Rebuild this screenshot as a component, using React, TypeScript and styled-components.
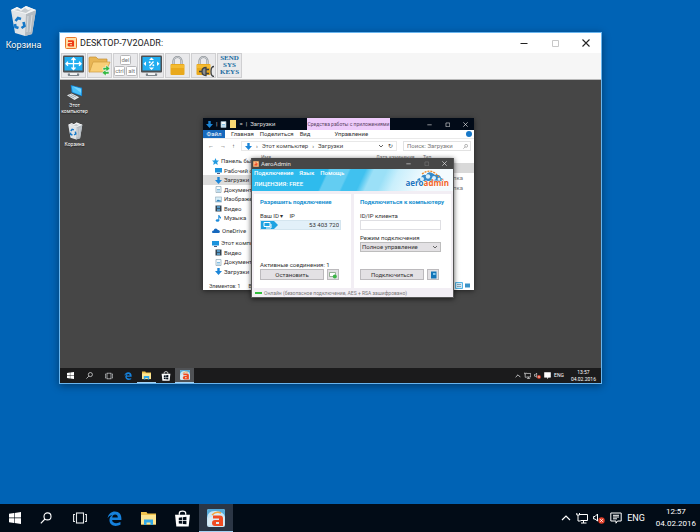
import React from 'react';
import styled, { createGlobalStyle, css } from 'styled-components';

const Global = createGlobalStyle`
  *, *::before, *::after { box-sizing: border-box; }
  body { margin: 0; background: #0063b5; font-family: Roboto, "Noto Sans", sans-serif; overflow: hidden; }
  button, input, select { font: inherit; color: inherit; margin: 0; }
  button { padding: 0; border: 0; background: none; display: flex; align-items: center; justify-content: center; }
  svg { display: block; flex: none; }
`;

/* ---------- icons ---------- */
type IconProps = { size?: number };

const BinIcon = ({ size = 32 }: IconProps) => (
  <svg width={size} height={size} viewBox="0 0 32 32">
    <path d="M4 5 L10 2 L14 4 L19 1 L24 3 L29 5 L25 29 L18 31 L8 28Z" fill="#dfe3e6" />
    <path d="M19 9 L29 5 L25 29 L18 31Z" fill="#b4bbc1" />
    <path d="M4 5 L19 9 L29 5 L24 3 L19 1 L14 4 L10 2Z" fill="#f4f5f6" />
    <path d="M7 5l4-1 3 2 4-3 3 2 4-1-6 4z" fill="#c6ccd0" />
    <path d="M21 11l-1 16M25 10l-2 17M6 9l3 17" stroke="#d9dee1" strokeWidth="1" />
    <path d="M8.500 16l2.500-3 3 1M16.500 17l1 4-3 2M11.500 23l-3-1-.5-3" fill="none" stroke="#1678c8" strokeWidth="2.600" />
  </svg>
);

const ComputerIcon = ({ size = 18 }: IconProps) => (
  <svg width={size} height={size} viewBox="0 0 18 18">
    <path d="M5 1L17 4v9L6 9z" fill="#1687d5" />
    <path d="M6 2l10 3v7L7 8.500z" fill="#48c0fa" />
    <path d="M7 2.500l9 7V5z" fill="#75d6ff" />
    <path d="M1 12l5-2 8 4-5 3z" fill="#e8ecef" />
    <path d="M3 12l6 3M5 11l6 3" stroke="#96a1a9" />
  </svg>
);

const AeroBadge = ({ size = 12 }: IconProps) => (
  <svg width={size} height={size} viewBox="0 0 12 12">
    <rect x=".5" y=".5" width="11" height="11" rx="1" fill="#ffe1a8" stroke="#e8762c" />
    <path d="M3 3.200h4.500Q9 3.200 9 4.600V9.500H4.200Q2.500 9.500 2.500 7.800T4.200 6H7V5H3zM7 7.300H4.800v1H7z" fill="#ee3a18" fillRule="evenodd" />
  </svg>
);

const AeroTaskIcon = ({ size = 18 }: IconProps) => (
  <svg width={size} height={size} viewBox="0 0 18 18">
    <rect width="18" height="18" rx="2" fill="#c9e6f5" />
    <path d="M0 9Q1 1 9 2T18 8V2Q18 0 16 0H2Q0 0 0 2z" fill="#56abd9" />
    <path d="M1 12q0-4 4-4 1-4 5-4 3 0 5 3 3 0 2 6v3H1z" fill="#dcecf4" />
    <path d="M5 6q4-4 9-2" fill="none" stroke="#f6a63a" strokeWidth="1.500" />
    <path d="M6 6.500h7q3 0 3 3V17H8q-3 0-3-3t3-3h4V9.500H6zM12 13H9v2h3z" fill="#f04b21" fillRule="evenodd" />
  </svg>
);

const MonitorFrame = ({ children }: { children: React.ReactNode }) => (
  <svg width="23" height="23" viewBox="0 0 23 23">
    <rect x="1" y="1.500" width="21" height="17" rx="1" fill="#4d5052" />
    <rect x="2.500" y="3" width="18" height="13.500" fill="#22aef0" />
    <path d="M6 19.500q-1 3 2 2.500h7q3 .5 2-2.500z" fill="#7d858b" />
    <path d="M8 19h7v2H8z" fill="#f1f2f3" />
    {children}
  </svg>
);

const FitIcon = () => (
  <MonitorFrame>
    <path d="M11.500 4v11.500M4 9.700h15M9.500 6l2-2 2 2M9.500 13.500l2 2 2-2M6 7.700l-2 2 2 2M17 7.700l2 2-2 2" fill="none" stroke="#fff" strokeWidth="1.300" />
  </MonitorFrame>
);

const ScaleIcon = () => (
  <MonitorFrame>
    <path d="M9 6l2.500-2.500L14 6zM9 13.500l2.500 2.500 2.500-2.500zM6 7.500L3.500 9.700 6 12zM17 7.500l2.500 2.200L17 12z" fill="#fff" />
    <path d="M13.500 7.500l-4 4.500" stroke="#fff" strokeWidth="1.300" />
    <circle cx="9.700" cy="8.300" r="1" fill="#fff" />
    <circle cx="13.300" cy="11.300" r="1" fill="#fff" />
  </MonitorFrame>
);

const TransferIcon = () => (
  <svg width="23" height="23" viewBox="0 0 23 23">
    <path d="M1 4q0-1 1-1h6l2 2h9v4H6L2 18H1z" fill="#e8b554" stroke="#c58f35" strokeWidth=".7" />
    <path d="M5 8h17l-4 10H1.500z" fill="#f9cf77" stroke="#cf9c40" strokeWidth=".7" />
    <path d="M15 13.500h3V11l4 3.500-4 3.500v-2h-3zM21 17.500v2.500h-3v2l-4-3.300 4-3.200v2z" fill="#36b845" stroke="#fff" strokeWidth=".5" />
  </svg>
);

const CadIcon = () => (
  <svg width="23" height="23" viewBox="0 0 23 23" fontFamily="Roboto" fontSize="6" fill="#777" textAnchor="middle">
    <g fill="#fff" stroke="#b7b7b9">
      <rect x="6.500" y="1.500" width="10" height="9" rx="1" />
      <rect x=".5" y="12.500" width="10" height="9" rx="1" />
      <rect x="12.500" y="12.500" width="10" height="9" rx="1" />
    </g>
    <text x="11.500" y="8">del</text>
    <text x="5.500" y="19">ctrl</text>
    <text x="17.500" y="19">alt</text>
  </svg>
);

const LockIcon = ({ plug = false }: { plug?: boolean }) => (
  <svg width="23" height="23" viewBox="0 0 23 23">
    <path d="M7.500 11V7a4 4 0 0 1 8 0v4" fill="none" stroke="#8c9196" strokeWidth="2.200" />
    <path d="M7.500 10V7a4 4 0 0 1 8 0v3" fill="none" stroke="#d9dcdf" strokeWidth=".8" />
    <rect x="4.500" y="10" width="14" height="11" rx="1" fill="#e9a91d" />
    <path d="M5 11h13v3H5z" fill="#f4bb31" />
    {plug && (
      <g>
        <path d="M7 17.500h3M14 13.500q-4 0-4 4t4 4z" fill="#8b8f93" stroke="#3f4245" strokeWidth="1.300" />
        <path d="M14 15.500h3M14 19.500h3M22 12.500q-3 0-3 5t3 5" fill="none" stroke="#3f4245" strokeWidth="1.300" />
      </g>
    )}
  </svg>
);

const StartIcon = ({ size = 12 }: IconProps) => (
  <svg width={size} height={size} viewBox="0 0 12 12" fill="#fff">
    <path d="M0 1.700l5-.7v4.600H0zM5.600.9L12 0v5.600H5.600zM0 6.300h5V11l-5-.7zM5.600 6.300H12V12l-6.400-.9z" />
  </svg>
);

const SearchIcon = ({ size = 12, color = '#fff' }: IconProps & { color?: string }) => (
  <svg width={size} height={size} viewBox="0 0 12 12" fill="none" stroke={color} strokeWidth="1.100">
    <circle cx="7.500" cy="4.400" r="3.500" />
    <path d="M5 7L.8 11.300" />
  </svg>
);

const TaskViewIcon = ({ size = 14 }: IconProps) => (
  <svg width={size} height={size} viewBox="0 0 14 14" fill="none" stroke="#e6e8ea" strokeWidth="1.100">
    <rect x="3.500" y="2" width="7" height="10" />
    <path d="M2 3.500H.6v7H2M12 3.500h1.400v7H12" />
  </svg>
);

const EdgeIcon = ({ size = 14 }: IconProps) => (
  <svg width={size} height={size} viewBox="0 0 24 24" fill="#1581dc">
    <path d="M1 11.500C2 4.500 7 .8 12.600.8 19.600.8 23 6 23 11.800V14.500H8.200c.2 3.400 3 5 6.600 5 2.600 0 4.700-.6 6.700-1.800V22c-2.200 1.200-4.800 1.800-7.600 1.800-6 0-10-3.500-10-9.300 0-3.700 2-6.500 5-8.100C4.900 7 2.600 8.700 1 11.500zM8.300 10.300h9c0-2.800-1.500-4.600-4.300-4.600-2.500 0-4.200 1.700-4.700 4.600z" />
  </svg>
);

const FolderIcon = ({ size = 15 }: IconProps) => (
  <svg width={size} height={size} viewBox="0 0 15 15">
    <path d="M0 1h5.500l1 1.500H15v11H0z" fill="#f2c44d" />
    <path d="M0 4h15v9.500H0z" fill="#fde693" />
    <path d="M3 14V8.500h9V14H9.500v-2.500h-4V14z" fill="#32a9e8" />
  </svg>
);

const StoreIcon = ({ size = 16 }: IconProps) => (
  <svg width={size} height={size} viewBox="0 0 16 16">
    <path d="M5 4.500V3q0-2 3-2t3 2v1.500" fill="none" stroke="#fff" strokeWidth="1.200" />
    <path d="M1 4.500h14L13.800 15.500H2.200z" fill="#fff" />
    <path d="M4.500 7.200l3-.3v2.700h-3zM8.200 6.800l3.500-.4v3.200H8.200zM4.500 10.300h3V13l-3-.3zM8.200 10.300h3.500v3.200l-3.500-.4z" fill="#020c17" />
  </svg>
);

const ChevronUp = ({ size = 10 }: IconProps) => (
  <svg width={size} height={size} viewBox="0 0 10 10" fill="none" stroke="#fff" strokeWidth="1.200"><path d="M1 7l4-4 4 4" /></svg>
);

const NetworkIcon = ({ size = 12 }: IconProps) => (
  <svg width={size} height={size} viewBox="0 0 12 12" fill="none" stroke="#fff">
    <path d="M4 2.500h7.500v6H4.500M7.500 8.500v2.500M5 11h5.500M.8 1v2h2.700V1M2 3v6h2.500" />
  </svg>
);

const VolumeIcon = ({ size = 12 }: IconProps) => (
  <svg width={size} height={size} viewBox="0 0 12 12" fill="none" stroke="#fff">
    <path d="M.6 4.500H2L4.500 2v7L2 7H.6z" />
    <circle cx="8.500" cy="8.500" r="3.200" fill="#e4432d" stroke="none" />
    <path d="M7.300 7.300l2.400 2.400M9.700 7.300L7.300 9.700" />
  </svg>
);

const NoticeIcon = ({ size = 12, filled = false }: IconProps & { filled?: boolean }) => (
  <svg width={size} height={size} viewBox="0 0 12 12" fill={filled ? '#fff' : 'none'} stroke="#fff">
    <path d="M.8 1h10.400v8H7.500L6 11.200V9H.8z" />
    {!filled && <path d="M3 3.300h6M3 5h6M3 6.800h4" />}
  </svg>
);

const MinIcon = ({ size = 8 }: IconProps) => (
  <svg width={size} height={size} viewBox="0 0 8 8" stroke="currentColor"><path d="M.5 4.500h7" /></svg>
);
const MaxIcon = ({ size = 8 }: IconProps) => (
  <svg width={size} height={size} viewBox="0 0 8 8" fill="none" stroke="currentColor"><path d="M1.500 1.500h6v6h-6z" /></svg>
);
const CloseIcon = ({ size = 8 }: IconProps) => (
  <svg width={size} height={size} viewBox="0 0 8 8" stroke="currentColor" strokeWidth="1.100"><path d="M.5.5l7 7M7.500.5l-7 7" /></svg>
);
const ChevronDown = () => (
  <svg width="6" height="6" viewBox="0 0 6 6" fill="none" stroke="#666"><path d="M1 2l2 2 2-2" /></svg>
);

const DownArrow = ({ size = 7 }: IconProps) => (
  <svg width={size} height={size} viewBox="0 0 7 7" fill="#1c86d8"><path d="M2.300 0h2.400v3H7L3.500 7 0 3h2.300z" /></svg>
);
const StarIcon = () => (
  <svg width="7" height="7" viewBox="0 0 7 7" fill="#239be0"><path d="M3.500 0l1 2.400L7 2.600 5.200 4.300l.5 2.600-2.200-1.400-2.200 1.400.5-2.600L0 2.600l2.500-.2z" /></svg>
);
const ScreenIcon = () => (
  <svg width="7" height="7" viewBox="0 0 7 7"><path d="M0 1h7v4.500H0z" fill="#1e94dd" /><path d="M2 6.500h3" stroke="#557" /></svg>
);
const PageIcon = () => (
  <svg width="7" height="7" viewBox="0 0 7 7"><path d="M1 .5h5v6H1z" fill="#f6fafc" stroke="#8ba5b5" strokeWidth=".7" /><path d="M2 3.500h3M2 5h3" stroke="#55a3d5" strokeWidth=".7" /></svg>
);
const ImageIcon = () => (
  <svg width="7" height="7" viewBox="0 0 7 7"><path d="M.3 1h6.400v5H.3z" fill="#d8eef8" stroke="#8ba5b5" strokeWidth=".6" /><path d="M1 5.500l2-2 1.200 1L5 4l1.300 1.500z" fill="#287bb5" /></svg>
);
const FilmIcon = () => (
  <svg width="7" height="7" viewBox="0 0 7 7"><path d="M.5.5h6v6h-6z" fill="#35434f" /><path d="M2 1h3v2.200H2zM2 4h3v2H2z" fill="#5698c4" /></svg>
);
const NoteIcon = () => (
  <svg width="7" height="7" viewBox="0 0 7 7" fill="#1e8cda"><ellipse cx="2.500" cy="5.500" rx="1.800" ry="1.300" /><path d="M3.300 0h1q0 1 1.700 2.200V4Q5 3 4.300 2.600v3h-1z" /></svg>
);
const CloudIcon = () => (
  <svg width="8" height="7" viewBox="0 0 8 7" fill="#1668bd"><path d="M1 6q-1.300-.3-.9-1.600Q.6 3.400 1.700 3.500 2 1.500 3.800 1.500q1.500 0 2 1.500 1.900-.2 2.100 1.500Q7.900 6 6.500 6z" /></svg>
);

const AeroLogo = () => (
  <svg width="46" height="20" viewBox="0 0 46 20">
    <path d="M12 12q0-3 4-3 1-4 5-3 2-4 6-2 2 1 3 2 5-1 6 3 3 0 3 3z" fill="#3489c9" />
    <g fill="#d9effa">
      <circle cx="17" cy="10" r="2" /><circle cx="23" cy="7.500" r="2.200" /><circle cx="29" cy="9" r="2" /><circle cx="34" cy="10" r="1.500" />
    </g>
    <path d="M17 5q7-5 13-1l4 4" fill="none" stroke="#f08a2a" strokeWidth="1.300" strokeDasharray="2 1" />
    <text x="44" y="17" textAnchor="end" fontFamily="Open Sans" fontWeight="700" fontSize="8" fill="#1b74c0" stroke="#fff" strokeWidth=".8" paintOrder="stroke">
      aero<tspan fill="#f0642a">admin</tspan>
    </text>
  </svg>
);

/* ---------- desktop ---------- */
const Desktop = styled.main`
  position: relative;
  min-height: 100vh;
  display: flex;
  flex-direction: column;
  justify-content: space-between;
  background: #0063b5;
`;

const Shortcuts = styled.div<{ $small?: boolean }>`
  display: flex;
  flex-direction: column;
  align-items: center;
  color: #fff;
  ${p => p.$small
    ? css`width: 29px; gap: 8px; padding-top: 4px; font-size: 5px; line-height: 6px;`
    : css`width: 47px; padding-top: 5px; font-size: 9px; line-height: 12px;`}
`;

const Shortcut = styled.button<{ $small?: boolean }>`
  flex-direction: column;
  gap: ${p => (p.$small ? 1 : 2)}px;
  text-shadow: 0 1px 1px #0008;
`;

const RemoteWindow = styled.section`
  position: absolute;
  top: 32px;
  left: 59px;
  right: 98px;
  border: 1px solid #69b5ee;
  background: #fff;
  box-shadow: 0 2px 8px #0006;
`;

const TitleBar = styled.header`
  display: flex;
  align-items: center;
  height: 20px;
  padding-left: 5px;
  gap: 3px;
  font-size: 9px;
  color: #222;
`;

const Title = styled.h1`
  margin: 0;
  flex: 1;
  font: inherit;
`;

const WindowButtons = styled.div<{ $small?: boolean }>`
  display: flex;
  button { width: ${p => (p.$small ? 18 : 31)}px; }
  button:disabled { color: #c8c8c8; }
`;

const Toolbar = styled.div`
  display: flex;
  gap: 1px;
  height: 27px;
  padding: 0 1px 1px;
  background: #f6f6f6;
  border-bottom: 1px solid #b9b9b9;
`;

const Tool = styled.button`
  width: 25px;
  height: 25px;
  border: 1px solid #cfcfd1;
  background: #e9e9eb;
`;

const KeysLabel = styled.span`
  color: #176a9f;
  font: 700 7px/7px "Liberation Serif", serif;
`;

const RemoteDesktop = styled.div`
  position: relative;
  min-height: 288px;
  background: #464646;
`;

/* ---------- taskbar ---------- */
const Bar = styled.footer<{ $small?: boolean }>`
  display: flex;
  justify-content: space-between;
  height: ${p => (p.$small ? 15 : 28)}px;
  background: ${p => (p.$small ? '#1b1b1c' : '#020c17')};
  color: #fff;
  font-size: ${p => (p.$small ? 5 : 8)}px;
  line-height: ${p => (p.$small ? 7 : 12)}px;
`;

const Apps = styled.nav`
  display: flex;
`;

const AppButton = styled.button<{ $small?: boolean; $start?: boolean; $state?: 'open' | 'active' }>`
  width: ${p => (p.$small ? (p.$start ? 20 : 19) : p.$start ? 29 : 34)}px;
  ${p => p.$state && css`border-bottom: 1px solid #a5d3f4;`}
  ${p => p.$state === 'active' && css`background: ${p.$small ? '#505255' : '#2b3645'};`}
`;

const Tray = styled.div<{ $small?: boolean }>`
  display: flex;
  align-items: center;
  gap: ${p => (p.$small ? 3 : 5)}px;
  padding-right: ${p => (p.$small ? 5 : 4)}px;
`;

const Language = styled.span<{ $small?: boolean }>`
  font-size: ${p => (p.$small ? 5 : 9)}px;
`;

const Clock = styled.time<{ $small?: boolean }>`
  display: flex;
  flex-direction: column;
  align-items: center;
  margin-left: ${p => (p.$small ? 4 : 6)}px;
`;

function Taskbar({ small, time }: { small?: boolean; time: string }) {
  const s = (large: number, little: number) => (small ? little : large);
  return (
    <Bar $small={small}>
      <Apps>
        <AppButton $small={small} $start aria-label="Пуск"><StartIcon size={s(12, 7)} /></AppButton>
        <AppButton $small={small} aria-label="Поиск"><SearchIcon size={s(12, 7)} /></AppButton>
        <AppButton $small={small} aria-label="Представление задач"><TaskViewIcon size={s(14, 8)} /></AppButton>
        <AppButton $small={small} aria-label="Edge"><EdgeIcon size={s(15, 8)} /></AppButton>
        <AppButton $small={small} $state={small ? 'open' : undefined} aria-label="Проводник"><FolderIcon size={s(15, 9)} /></AppButton>
        <AppButton $small={small} aria-label="Магазин"><StoreIcon size={s(17, 10)} /></AppButton>
        <AppButton $small={small} $state="active" aria-label="AeroAdmin"><AeroTaskIcon size={s(18, 10)} /></AppButton>
      </Apps>
      <Tray $small={small}>
        <ChevronUp size={s(10, 6)} />
        <NetworkIcon size={s(12, 7)} />
        <VolumeIcon size={s(12, 7)} />
        <NoticeIcon size={s(12, 7)} filled={small} />
        <Language $small={small}>ENG</Language>
        <Clock $small={small}><span>{time}</span><span>04.02.2016</span></Clock>
      </Tray>
    </Bar>
  );
}

/* ---------- explorer ---------- */
const Explorer = styled.section`
  position: absolute;
  top: 38px;
  left: 143px;
  width: 271px;
  background: #fff;
  color: #333;
  font-size: 6px;
  line-height: 8px;
  box-shadow: 0 1px 5px #0008;
`;

const ExplorerTitle = styled.header`
  display: flex;
  align-items: center;
  height: 12px;
  padding-left: 3px;
  gap: 3px;
  background: #020b18;
  color: #ddd;
`;

const ContextTab = styled.span`
  margin: 0 auto 0 28px;
  padding: 2px 1px;
  background: #eecbfb;
  color: #5c4566;
  font-size: 5px;
  white-space: nowrap;
`;

const Ribbon = styled.nav`
  display: flex;
  align-items: center;
  height: 9px;
  border-bottom: 1px solid #eaeaea;
  button { line-height: 8px; }
`;

const RibbonTab = styled.button<{ $file?: boolean; $indent?: number }>`
  margin-left: ${p => p.$indent ?? 0}px;
  ${p => p.$file && css`width: 22px; height: 8px; background: #1669bd; color: #fff;`}
`;

const HelpDot = styled.span`
  width: 6px;
  height: 6px;
  margin: 0 2px 0 auto;
  border-radius: 50%;
  background: #1778c8;
`;

const AddressRow = styled.div`
  display: flex;
  align-items: center;
  height: 14px;
  padding: 0 3px 0 5px;
  gap: 6px;
  color: #444;
`;

const Crumbs = styled.div`
  display: flex;
  flex: 1;
  align-items: center;
  gap: 4px;
  height: 10px;
  padding: 0 3px;
  border: 1px solid #e8e8e8;
`;

const Push = styled.span`
  margin-left: auto;
`;

const SearchBox = styled.label`
  display: flex;
  align-items: center;
  width: 68px;
  height: 10px;
  padding: 0 2px;
  border: 1px solid #e2e2e2;
  input { flex: 1; min-width: 0; padding: 0 1px; border: 0; outline: 0; background: none; }
  input::placeholder { color: #777; }
`;

const ExplorerBody = styled.div`
  display: grid;
  grid-template-columns: 58px 1fr;
  height: 128px;
  overflow: hidden;
`;

const Sidebar = styled.ul`
  margin: 0;
  padding: 3px 0 0;
  list-style: none;
`;

const SideItem = styled.li<{ $root?: boolean; $selected?: boolean; $gap?: boolean }>`
  display: flex;
  align-items: center;
  gap: 2px;
  height: 10px;
  margin-top: ${p => (p.$gap ? 3 : 0)}px;
  padding-left: ${p => (p.$root ? 9 : 12)}px;
  white-space: nowrap;
  ${p => p.$selected && css`background: #dcdcdc;`}
  &:nth-child(even) { height: 9px; }
`;

const Files = styled.table`
  width: 100%;
  border-collapse: collapse;
  align-self: start;
  text-align: left;
  white-space: nowrap;
  th, td { padding: 0; font-weight: 400; height: 10px; color: #777; }
  th { padding-bottom: 2px; line-height: 6px; font-size: 5px; }
  th:first-child { width: 54%; }
  th:nth-child(2) { width: 22%; }
  tbody tr:first-child { background: #d9d9d9; }
  td:last-child { text-align: right; padding-right: 11px; }
`;

const ExplorerStatus = styled.footer`
  display: flex;
  align-items: center;
  gap: 8px;
  height: 9px;
  padding: 0 3px 0 6px;
  font-size: 5px;
  svg { margin-left: auto; }
`;

const places: { icon: React.ReactNode; name: string; root?: boolean; selected?: boolean; gap?: boolean }[] = [
  { icon: <StarIcon />, name: 'Панель быстр', root: true },
  { icon: <ScreenIcon />, name: 'Рабочий сто' },
  { icon: <DownArrow />, name: 'Загрузки', selected: true },
  { icon: <PageIcon />, name: 'Документы' },
  { icon: <ImageIcon />, name: 'Изображени' },
  { icon: <FilmIcon />, name: 'Видео' },
  { icon: <NoteIcon />, name: 'Музыка' },
  { icon: <CloudIcon />, name: 'OneDrive', root: true, gap: true },
  { icon: <ScreenIcon />, name: 'Этот компью', root: true, gap: true },
  { icon: <FilmIcon />, name: 'Видео' },
  { icon: <PageIcon />, name: 'Документы' },
  { icon: <DownArrow />, name: 'Загрузки' },
];

function ExplorerWindow() {
  return (
    <Explorer>
      <ExplorerTitle>
        <DownArrow /><span>|</span>
        <PageIcon />
        <svg width="6" height="8" viewBox="0 0 6 8"><path d="M0 0h6v8H0z" fill="#f7d774" /></svg>
        <span>=</span><span>|</span>
        <span>Загрузки</span>
        <ContextTab>Средства работы с приложениями</ContextTab>
        <WindowButtons $small>
          <button aria-label="Свернуть"><MinIcon size={5} /></button>
          <button aria-label="Развернуть"><MaxIcon size={5} /></button>
          <button aria-label="Закрыть"><CloseIcon size={5} /></button>
        </WindowButtons>
      </ExplorerTitle>
      <Ribbon>
        <RibbonTab $file>Файл</RibbonTab>
        <RibbonTab $indent={6}>Главная</RibbonTab>
        <RibbonTab $indent={6}>Поделиться</RibbonTab>
        <RibbonTab $indent={6}>Вид</RibbonTab>
        <RibbonTab $indent={24}>Управление</RibbonTab>
        <HelpDot />
      </Ribbon>
      <AddressRow>
        <span>←</span><span>→</span><span>↑</span>
        <Crumbs>
          <DownArrow /><span>›</span><span>Этот компьютер</span><span>›</span><span>Загрузки</span>
          <Push><ChevronDown /></Push><span>↻</span>
        </Crumbs>
        <SearchBox>
          <input aria-label="Поиск" placeholder="Поиск: Загрузки" />
          <SearchIcon size={5} color="#666" />
        </SearchBox>
      </AddressRow>
      <ExplorerBody>
        <Sidebar>
          {places.map((p, i) => (
            <SideItem key={i} $root={p.root} $selected={p.selected} $gap={p.gap}>{p.icon}{p.name}</SideItem>
          ))}
        </Sidebar>
        <Files>
          <thead><tr><th>Имя</th><th>Дата изменения</th><th>Тип</th></tr></thead>
          <tbody>
            <tr><td /><td /><td /></tr>
            <tr><td /><td /><td>пка</td></tr>
            <tr><td /><td /><td>пка</td></tr>
          </tbody>
        </Files>
      </ExplorerBody>
      <ExplorerStatus>
        <span>Элементов: 1</span><span>Вы</span>
        <svg width="16" height="7" viewBox="0 0 16 7">
          <path d="M.5.5h7v6h-7z" fill="#cdeafa" stroke="#55b4e5" />
          <path d="M2 2.500h4M2 4.500h4" stroke="#71848f" strokeWidth=".7" />
          <path d="M10 1.500h5v4h-5z" fill="#3a93c8" />
        </svg>
      </ExplorerStatus>
    </Explorer>
  );
}

/* ---------- AeroAdmin ---------- */
const Aero = styled.section`
  position: absolute;
  top: 78px;
  left: 191px;
  width: 203px;
  border: 1px solid #555;
  border-top: 0;
  background: #f2eef4;
  color: #333;
  font-size: 6px;
  line-height: 8px;
  box-shadow: 0 1px 5px #000a;
`;

const AeroTitle = styled.header`
  display: flex;
  align-items: center;
  gap: 2px;
  height: 11px;
  padding-left: 1px;
  background: #474747;
  color: #e4e4e4;
  span { flex: 1; }
  button:disabled { color: #777; }
`;

const AeroHeader = styled.div`
  display: flex;
  justify-content: space-between;
  align-items: flex-start;
  height: 22px;
  padding: 0 2px;
  color: #fff;
  font-weight: 500;
  background: linear-gradient(115deg, #2ebbed 0 36%, #63cdf2 37% 46%, #40c1ef 47% 54%, #9be0f7 58% 64%, #c9effc 70%, #f4fbfe 84%);
`;

const Menu = styled.nav`
  display: flex;
  gap: 6px;
  margin-bottom: 3px;
  button { line-height: 8px; }
`;

const Panels = styled.div`
  display: grid;
  grid-template-columns: minmax(0, 1fr) minmax(0, 1fr);
  gap: 3px;
  padding: 3px 2px 0;
`;

const Panel = styled.form`
  display: flex;
  flex-direction: column;
  height: 94px;
  padding: 4px 10px 8px 6px;
  background: #fff;
`;

const Heading = styled.h2`
  margin: 0 0 6px;
  color: #168fcf;
  font-size: 6px;
  line-height: 8px;
  white-space: nowrap;
`;

const Label = styled.label`
  display: flex;
  gap: 6px;
  line-height: 8px;
`;

const Field = styled.div<{ $tinted?: boolean }>`
  display: flex;
  height: 10px;
  border: 1px solid ${p => (p.$tinted ? '#d4e5ef' : '#dfdfe3')};
  background: ${p => (p.$tinted ? '#e2f0f9' : '#fff')};
  input { flex: 1; min-width: 0; padding: 0 1px; border: 0; outline: 0; background: none; text-align: right; font-size: 6px; }
`;

const ModeBox = styled.div`
  display: grid;
  grid-template-columns: 1fr 8px;
  align-items: center;
  height: 10px;
  border: 1px solid #bdbdbd;
  background: #e3e1e4;
  select { grid-area: 1 / 1 / 2 / 3; appearance: none; padding: 0 1px; border: 0; outline: 0; background: none; line-height: 8px; height: 8px; }
  svg { grid-area: 1 / 2; pointer-events: none; }
`;

const ModeLabel = styled(Label)`
  margin-top: 4px;
`;

const Foot = styled.div`
  margin-top: auto;
`;

const Actions = styled.div`
  display: flex;
  gap: 3px;
`;

const Action = styled.button<{ $icon?: boolean }>`
  height: 11px;
  border: 1px solid #bcbabd;
  background: #e3e1e4;
  ${p => (p.$icon ? css`width: 12px; margin-right: 2px;` : css`flex: 1;`)}
`;

const AeroStatus = styled.footer`
  display: flex;
  align-items: center;
  gap: 2px;
  height: 9px;
  padding-left: 3px;
  color: #777;
  font-size: 5px;
  white-space: nowrap;
`;

const Signal = styled.i`
  width: 7px;
  height: 2px;
  background: #32bd3c;
`;

function AeroWindow() {
  return (
    <Aero>
      <AeroTitle>
        <AeroBadge size={6} />
        <span>AeroAdmin</span>
        <WindowButtons $small>
          <button aria-label="Свернуть"><MinIcon size={5} /></button>
          <button aria-label="Развернуть" disabled><MaxIcon size={5} /></button>
          <button aria-label="Закрыть"><CloseIcon size={5} /></button>
        </WindowButtons>
      </AeroTitle>
      <AeroHeader>
        <div>
          <Menu><button>Подключение</button><button>Язык</button><button>Помощь</button></Menu>
          <span>ЛИЦЕНЗИЯ: FREE</span>
        </div>
        <AeroLogo />
      </AeroHeader>
      <Panels>
        <Panel>
          <Heading>Разрешить подключение</Heading>
          <Label htmlFor="own-id"><span>Ваш ID ▾</span><span>IP</span></Label>
          <Field $tinted>
            <svg width="17" height="8" viewBox="0 0 17 8">
              <path d="M0 0h13l4 4-4 4H0z" fill="#1ea2e2" />
              <path d="M3 1.500h6v4H3zM5 7h5V3" fill="none" stroke="#fff" />
            </svg>
            <input id="own-id" readOnly value="53 403 720" />
          </Field>
          <Foot>
            <span>Активные соединения: 1</span>
            <Actions>
              <Action type="button">Остановить</Action>
              <Action type="button" $icon aria-label="Сообщение">
                <svg width="8" height="8" viewBox="0 0 8 8"><path d="M.5 1.500h6v4h-6z" fill="#fff" stroke="#82a282" strokeWidth=".8" /><circle cx="5.800" cy="5.500" r="2" fill="#3bb545" /></svg>
              </Action>
            </Actions>
          </Foot>
        </Panel>
        <Panel>
          <Heading>Подключиться к компьютеру</Heading>
          <Label htmlFor="client-id">ID/IP клиента</Label>
          <Field><input id="client-id" /></Field>
          <ModeLabel htmlFor="mode">Режим подключения</ModeLabel>
          <ModeBox>
            <select id="mode"><option>Полное управление</option></select>
            <ChevronDown />
          </ModeBox>
          <Foot>
            <Actions>
              <Action type="button">Подключиться</Action>
              <Action type="button" $icon aria-label="Адресная книга">
                <svg width="7" height="8" viewBox="0 0 7 8"><path d="M1 .5h5.500v7H1z" fill="#1375b8" /><path d="M3 2h2.500v2H3z" fill="#7fc8ee" /></svg>
              </Action>
            </Actions>
          </Foot>
        </Panel>
      </Panels>
      <AeroStatus><Signal />Онлайн (безопасное подключение, AES + RSA зашифровано)</AeroStatus>
    </Aero>
  );
}

export default function App() {
  return (
    <>
      <Global />
      <Desktop>
        <Shortcuts><Shortcut><BinIcon />Корзина</Shortcut></Shortcuts>
        <RemoteWindow>
          <TitleBar>
            <AeroBadge />
            <Title>DESKTOP-7V2OADR:</Title>
            <WindowButtons>
              <button aria-label="Свернуть"><MinIcon /></button>
              <button aria-label="Развернуть" disabled><MaxIcon /></button>
              <button aria-label="Закрыть"><CloseIcon /></button>
            </WindowButtons>
          </TitleBar>
          <Toolbar>
            <Tool aria-label="Во весь экран"><FitIcon /></Tool>
            <Tool aria-label="Передача файлов"><TransferIcon /></Tool>
            <Tool aria-label="Ctrl+Alt+Del"><CadIcon /></Tool>
            <Tool aria-label="Масштаб"><ScaleIcon /></Tool>
            <Tool aria-label="Заблокировать"><LockIcon /></Tool>
            <Tool aria-label="Отключить ввод"><LockIcon plug /></Tool>
            <Tool><KeysLabel>SEND SYS KEYS</KeysLabel></Tool>
          </Toolbar>
          <RemoteDesktop>
            <Shortcuts $small>
              <Shortcut $small><ComputerIcon size={17} /><span>Этот<br />компьютер</span></Shortcut>
              <Shortcut $small><BinIcon size={18} />Корзина</Shortcut>
            </Shortcuts>
            <ExplorerWindow />
            <AeroWindow />
          </RemoteDesktop>
          <Taskbar small time="13:57" />
        </RemoteWindow>
        <Taskbar time="12:57" />
      </Desktop>
    </>
  );
}
